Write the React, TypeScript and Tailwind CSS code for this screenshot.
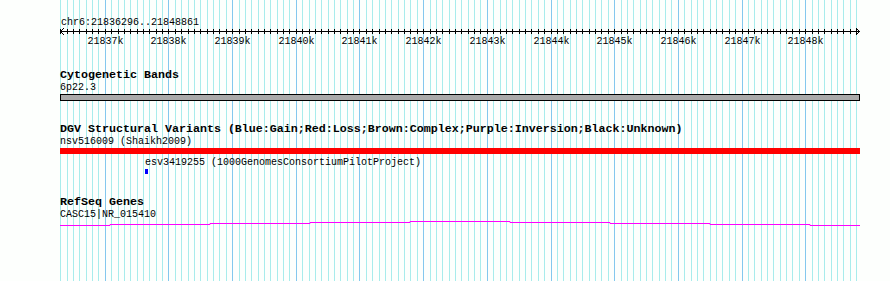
import React from 'react';

const START = 21836296;
const END = 21848861;
const LEFT = 60;
const WIDTH = 800;

const toX = (pos: number) => LEFT + ((pos - START) * WIDTH) / (END - START);

const gridPositions: number[] = [];
for (let p = 21836300; p <= END; p += 100) gridPositions.push(p);

const majors = gridPositions.filter((p) => p % 1000 === 0);

// step heights of the transcript line, one per 100px block
const geneSteps = [224, 223, 222, 221, 220, 221, 222, 223, 224];

const Grid = () => (
  <svg className="absolute inset-0" width={890} height={281}>
    {gridPositions.map((p) => {
      const x = Math.round(toX(p)) + 0.5;
      const major = p % 1000 === 0;
      return (
        <line
          key={p}
          x1={x}
          x2={x}
          y1={0}
          y2={281}
          stroke={major ? '#84c8ee' : '#a8ecec'}
          strokeWidth={1}
        />
      );
    })}
  </svg>
);

const Ruler = () => (
  <svg width={810} height={17} className="block overflow-visible">
    <line x1={0} x2={WIDTH} y1={2.5} y2={2.5} stroke="#000" />
    <polyline points="4,-1 0.5,2.5 4,6" fill="none" stroke="#000" />
    <polyline points={`${WIDTH - 4},-1 ${WIDTH - 0.5},2.5 ${WIDTH - 4},6`} fill="none" stroke="#000" />
    {gridPositions.map((p) => {
      const x = Math.round(toX(p)) - LEFT + 0.5;
      return <line key={p} x1={x} x2={x} y1={0} y2={5} stroke="#000" />;
    })}
    {majors.map((p) => (
      <text
        key={p}
        x={Math.round(toX(p)) - LEFT + 0.5}
        y={14.5}
        textAnchor="middle"
        fontFamily='"Liberation Mono", monospace'
        fontSize={10}
        fill="#000"
      >
        {p / 1000}k
      </text>
    ))}
  </svg>
);

const GeneLine = () => {
  const pts: string[] = [];
  geneSteps.forEach((y, i) => {
    const x1 = i === 0 ? 0 : 50 + (i - 1) * 100;
    const x2 = Math.min(50 + i * 100, WIDTH);
    pts.push(`${x1},${y - 220 + 0.5}`, `${x2},${y - 220 + 0.5}`);
  });
  return (
    <svg width={WIDTH} height={8} className="block">
      <polyline points={pts.join(' ')} fill="none" stroke="#ff00ff" strokeWidth={1} />
    </svg>
  );
};

const Title = ({ children, top }: { children: React.ReactNode; top: string }) => (
  <div className={`h-[12px] leading-[10px] text-[11.67px] font-bold whitespace-nowrap ${top}`}>{children}</div>
);

const Label = ({ children, className = '' }: { children: React.ReactNode; className?: string }) => (
  <div className={`h-[12px] leading-[12px] text-[10px] whitespace-nowrap ${className}`}>{children}</div>
);

export default function App() {
  return (
    <div
      className="relative w-[890px] h-[281px] bg-[#fdfffd] overflow-hidden text-black"
      style={{ fontFamily: '"Liberation Mono", "DejaVu Sans Mono", monospace' }}
    >
      <Grid />
      <div className="relative pl-[60px] pt-[16px]">
        <div className="h-[13px] leading-[13px] text-[10px] pl-[1px]">chr6:21836296..21848861</div>
        <div className="h-[17px] w-[810px]">
          <Ruler />
        </div>

        <Title top="mt-[24px]">Cytogenetic Bands</Title>
        <Label className="h-[11px]">6p22.3</Label>
        <div className="h-[7px] w-[800px] border border-black bg-[#aaaaaa]" />

        <Title top="mt-[23px]">DGV Structural Variants (Blue:Gain;Red:Loss;Brown:Complex;Purple:Inversion;Black:Unknown)</Title>
        <Label className="h-[11px]">nsv516009 (Shaikh2009)</Label>
        <div className="h-[6px] w-[800px] bg-[#ff0000]" />
        <Label className="mt-[3px] ml-[85px]">esv3419255 (1000GenomesConsortiumPilotProject)</Label>
        <div className="h-[5px] w-[3px] ml-[85px] bg-[#0000ff]" />

        <Title top="mt-[23px]">RefSeq Genes</Title>
        <Label>CASC15|NR_015410</Label>
        <GeneLine />
      </div>
    </div>
  );
}
